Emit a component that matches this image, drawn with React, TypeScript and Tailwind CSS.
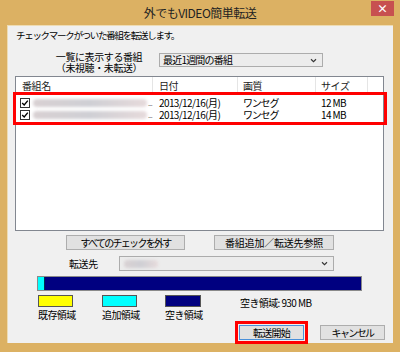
import { ReactNode } from "react"

const jp = "font-['Meiryo_UI','Noto_Sans_CJK_JP',sans-serif]"

function Check() {
  return (
    <span className="flex h-[10px] w-[10px] shrink-0 items-center justify-center border border-[#333] bg-white">
      <svg viewBox="0 0 10 10" className="h-[8px] w-[8px]">
        <path d="M1.5 5 L4 7.5 L8.5 2" fill="none" stroke="#000" strokeWidth="1.7" />
      </svg>
    </span>
  )
}

function Chevron() {
  return (
    <svg viewBox="0 0 8 6" className="h-[5px] w-[7px]">
      <path d="M1 1.5 L4 4.5 L7 1.5" fill="none" stroke="#333" strokeWidth="1.3" />
    </svg>
  )
}

function Btn({ children, className = "", tight = "tracking-[-0.6px]" }: { children: ReactNode; className?: string; tight?: string }) {
  return (
    <div className={`flex h-[15px] items-center justify-center whitespace-nowrap border bg-[#e1e1e1] text-[10px] leading-none text-black ${tight} ${className}`}>
      {children}
    </div>
  )
}

function Blur({ w }: { w: number }) {
  return (
    <div
      className="h-[8px] rounded-sm bg-gradient-to-r from-[#d8d0d2] via-[#cfcfd4] to-[#e6dadb] blur-[1.5px]"
      style={{ width: w }}
    />
  )
}

function Row({ size }: { size: string }) {
  return (
    <div className="flex h-[12px] items-center whitespace-nowrap text-[10px] leading-none tracking-[-0.6px] text-black">
      <div className="flex w-[137px] items-center pl-[4px]">
        <Check />
        <div className="ml-[3px]">
          <Blur w={114} />
        </div>
        <span className="ml-[1px] text-[7px] leading-none text-[#666]">...</span>
      </div>
      <div className="w-[85px] pl-[6px]">2013/12/16(月)</div>
      <div className="w-[78px] pl-[5px] tracking-[-1.2px]">ワンセグ</div>
      <div className="w-[52px] pl-[5px]">{size}</div>
    </div>
  )
}

export default function App() {
  return (
    <div className={`flex h-[352px] w-[400px] flex-col bg-[#dcb163] ${jp}`}>
      {/* title bar */}
      <div className="relative flex h-[25px] shrink-0 items-center justify-center">
        <span className="text-[12px] leading-none tracking-[-0.5px] text-[#222]">外でもVIDEO簡単転送</span>
        <div className="absolute right-[6px] top-[1px] flex h-[15px] w-[23px] items-center justify-center bg-[#c75050] text-[11px] font-bold leading-none text-white">
          ×
        </div>
      </div>

      {/* client */}
      <div className="mx-[7px] h-[318px] shrink-0 border-l border-t border-[#eedcb3] bg-[#f0f0f0] text-black">
        <div className="whitespace-nowrap pl-[8px] pt-[3px] text-[9.5px] leading-[12px] tracking-[-1.3px]">
          チェックマークがついた番組を転送します。
        </div>

        <div className="mt-[12px] flex h-[20px] items-start">
          <div className="ml-[46px] mt-[-1px] flex w-[90px] flex-col items-center whitespace-nowrap text-[10px] leading-[10.5px] tracking-[-0.4px]">
            <span>一覧に表示する番組</span>
            <span>（未視聴・未転送）</span>
          </div>
          <div className="ml-[15px] flex h-[14px] w-[164px] items-center justify-between border border-[#acacac] bg-[#ececec] pl-[3px] pr-[5px] text-[10px] leading-none tracking-[-0.8px]">
            <span>最近1週間の番組</span>
            <Chevron />
          </div>
        </div>

        {/* list view */}
        <div className="ml-[7px] mt-[3px] h-[155px] w-[369px] border border-[#828790] bg-white">
          <div className="flex h-[16px] items-center text-[10px] leading-none tracking-[-0.4px] text-[#222]">
            <div className="h-full w-[137px] border-r border-[#e5e5e5] pl-[6px] pt-[4px]">番組名</div>
            <div className="h-full w-[85px] border-r border-[#e5e5e5] pl-[6px] pt-[4px]">日付</div>
            <div className="h-full w-[78px] border-r border-[#e5e5e5] pl-[5px] pt-[4px]">画質</div>
            <div className="h-full w-[52px] border-r border-[#e5e5e5] pl-[5px] pt-[4px]">サイズ</div>
          </div>
          <div className="relative mt-[4px]">
            <Row size="12 MB" />
            <Row size="14 MB" />
            <div className="absolute -bottom-[4px] -left-[3px] -right-[4px] -top-[5px] border-[3px] border-[#f00]" />
          </div>
        </div>

        <div className="mt-[4px] flex">
          <Btn className="ml-[58px] w-[119px] border-[#adadad]" tight="tracking-[-1.7px]">すべてのチェックを外す</Btn>
          <Btn className="ml-[29px] w-[120px] border-[#adadad]" tight="tracking-[-0.2px]">番組追加／転送先参照</Btn>
        </div>

        <div className="mt-[6px] flex items-center">
          <span className="ml-[61px] w-[50px] text-[10px] leading-none tracking-[-0.4px]">転送先</span>
          <div className="flex h-[15px] w-[215px] items-center justify-between border border-[#acacac] bg-[#ececec] pl-[4px] pr-[5px]">
            <Blur w={34} />
            <Chevron />
          </div>
        </div>

        <div className="ml-[29px] mt-[5px] flex h-[15px] w-[325px] border border-[#8a8a8a] bg-[#000080]">
          <div className="h-full w-[7px] border-r border-[#003050] bg-[#00ffff]" />
        </div>

        <div className="mt-[4px] flex">
          <div className="ml-[30px] flex w-[64px] flex-col">
            <div className="h-[12px] w-[35px] border border-[#555] bg-[#ffff00]" />
            <span className="mt-[2px] text-[10px] leading-[12px] tracking-[-0.6px]">既存領域</span>
          </div>
          <div className="flex w-[63px] flex-col">
            <div className="h-[12px] w-[35px] border border-[#555] bg-[#00ffff]" />
            <span className="mt-[2px] text-[10px] leading-[12px] tracking-[-0.6px]">追加領域</span>
          </div>
          <div className="flex w-[75px] flex-col">
            <div className="h-[12px] w-[36px] border border-[#555] bg-[#000080]" />
            <span className="mt-[2px] text-[10px] leading-[12px] tracking-[-0.6px]">空き領域</span>
          </div>
          <span className="mt-[2px] whitespace-nowrap text-[10px] leading-[12px] tracking-[-0.6px]">空き領域: 930 MB</span>
        </div>

        <div className="mt-0 flex">
          <div className="ml-[227px] border-[3px] border-[#f00] p-[1px]">
            <Btn className="w-[65px] border-[#4a90d9]" tight="tracking-[-0.7px]">転送開始</Btn>
          </div>
          <Btn className="ml-[12px] mt-[4px] w-[65px] border-[#adadad]" tight="tracking-[-1.6px]">キャンセル</Btn>
        </div>
      </div>
    </div>
  )
}
